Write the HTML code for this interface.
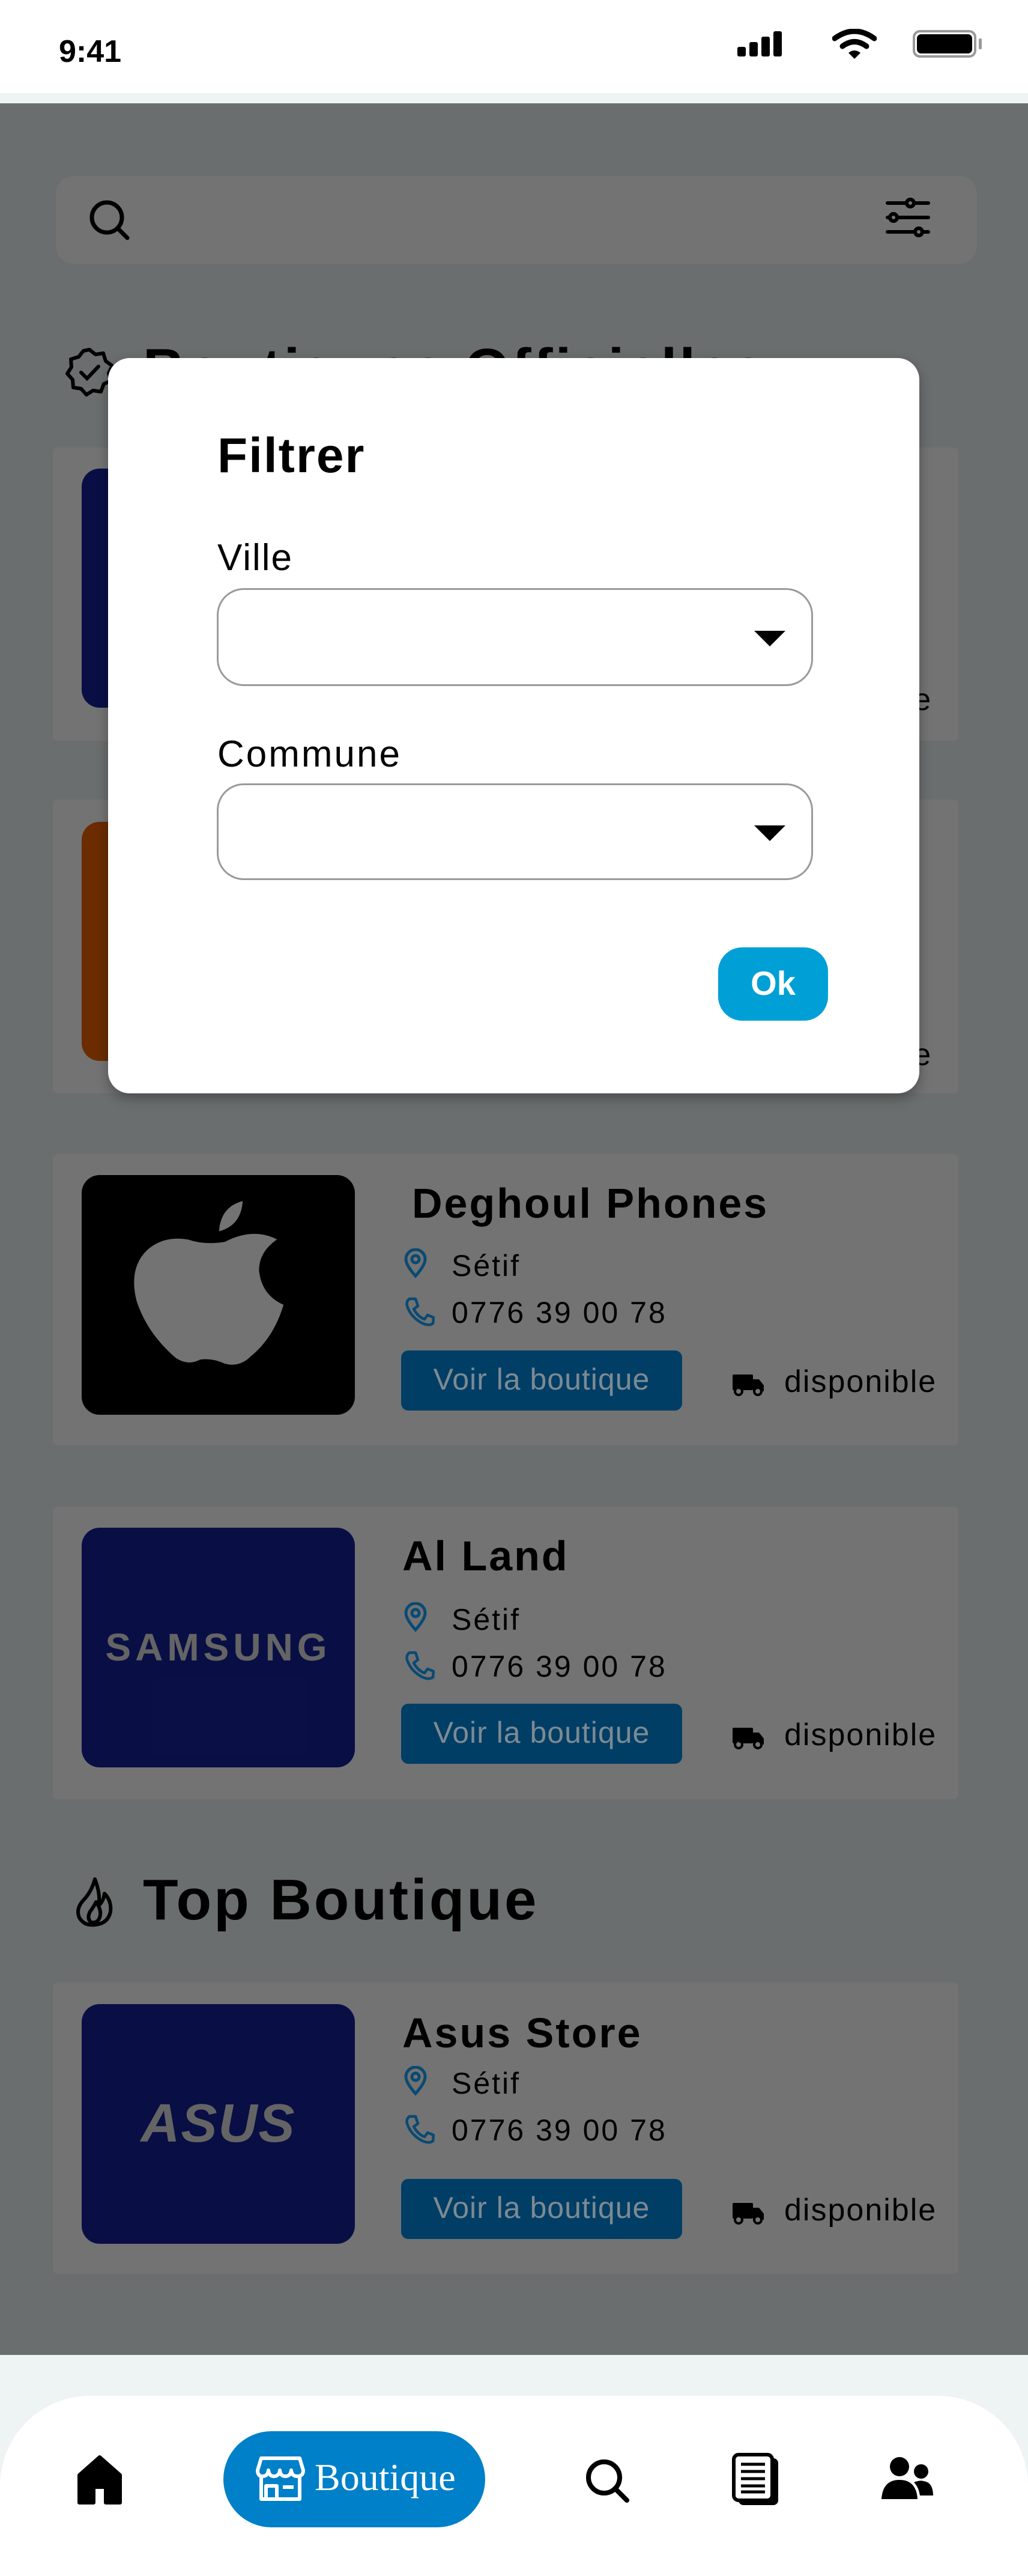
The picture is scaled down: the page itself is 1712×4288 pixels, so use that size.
<!DOCTYPE html>
<html><head><meta charset="utf-8">
<style>
*{margin:0;padding:0;box-sizing:border-box}
body{width:1712px;height:4268px;position:relative;overflow:hidden;background:#eef3f3;font-family:"Liberation Sans",sans-serif;color:#000}
.a{position:absolute}
.card{position:absolute;left:88px;width:1508px;background:#fff;border-radius:8px}
.logo{position:absolute;left:48px;width:455px;border-radius:30px;overflow:hidden}
.title{position:absolute;font-weight:bold;font-size:70px;letter-spacing:3px;white-space:nowrap}
.line{position:absolute;font-size:50px;letter-spacing:3px;white-space:nowrap}
.btn{position:absolute;width:468px;height:100px;background:#008ce3;border-radius:12px;color:#f2f2f2;font-size:50px;text-align:center;line-height:96px;letter-spacing:1px}
.disp{position:absolute;font-size:52px;letter-spacing:2px}
</style></head><body>
<!-- status bar -->
<div class="a" style="left:0;top:0;width:1712px;height:155px;background:#fff"></div>
<div class="a" style="left:98px;top:56px;font-size:52px;font-weight:bold">9:41</div>
<svg class="a" style="left:1228px;top:52px" width="76" height="44"><rect x="0" y="26" width="14" height="16" rx="3"/><rect x="20" y="18" width="14" height="24" rx="3"/><rect x="40" y="9" width="14" height="33" rx="3"/><rect x="60" y="0" width="14" height="42" rx="3"/></svg>
<svg class="a" style="left:1386px;top:48px" width="74" height="52" viewBox="0 0 74 52"><path d="M4 16 Q37 -8 70 16" stroke="#000" stroke-width="9" fill="none" stroke-linecap="round"/><path d="M17 29 Q37 14 57 29" stroke="#000" stroke-width="9" fill="none" stroke-linecap="round"/><path d="M27 40 L37 50 L47 40 Q37 32 27 40Z"/></svg>
<div class="a" style="left:1520px;top:50px;width:106px;height:46px;border:4px solid #999;border-radius:12px"></div>
<div class="a" style="left:1527px;top:57px;width:92px;height:32px;background:#000;border-radius:7px"></div>
<div class="a" style="left:1630px;top:64px;width:5px;height:18px;background:#999;border-radius:2px"></div>

<!-- search -->
<div class="a" style="left:93px;top:293px;width:1534px;height:146px;background:#fff;border-radius:30px"></div>
<svg class="a" style="left:146px;top:330px" width="76" height="70"><circle cx="32" cy="32" r="25" stroke="#000" stroke-width="7" fill="none"/><path d="M50 50 L66 66" stroke="#000" stroke-width="7" stroke-linecap="round"/></svg>
<svg class="a" style="left:1474px;top:328px" width="76" height="70"><g stroke="#000" stroke-width="6" fill="none" stroke-linecap="round"><path d="M4 10H72M4 34H72M4 58H72"/><circle cx="42" cy="10" r="6" fill="#fff"/><circle cx="14" cy="34" r="6" fill="#fff"/><circle cx="56" cy="58" r="6" fill="#fff"/></g></svg>

<!-- heading officielles -->
<svg class="a" style="left:106px;top:576px" width="86" height="86" viewBox="0 0 86 86"><path d="M43 6 L53 14 L66 12 L70 25 L81 33 L75 45 L79 58 L67 63 L62 76 L49 74 L38 81 L29 71 L16 69 L15 56 L6 46 L13 35 L12 22 L25 18 L33 8Z" stroke="#000" stroke-width="6" fill="none" stroke-linejoin="round"/><path d="M29 44 L39 54 L58 34" stroke="#000" stroke-width="6" fill="none" stroke-linecap="round"/></svg>
<div class="a" style="left:238px;top:560px;font-size:96px;font-weight:bold;letter-spacing:4px">Boutiques Officielles</div>

<!-- card1 -->
<div class="card" style="top:745px;height:488px">
 <div class="logo" style="top:35px;height:398px;background:#162399"></div>
 <div class="disp" style="left:1210px;top:390px">disponible</div>
</div>
<!-- card2 -->
<div class="card" style="top:1331px;height:489px">
 <div class="logo" style="top:37px;height:398px;background:#ee6200"></div>
 <div class="disp" style="left:1210px;top:395px">disponible</div>
</div>

<!-- card3 -->
<div class="card" style="top:1921px;height:485px">
 <div class="logo" style="top:35px;height:399px;background:#000">
  <svg width="455" height="399" viewBox="0 0 455 399"><g transform="translate(207 182) scale(1.36) translate(-207 -180)"><path d="M230 128 Q265 110 294 125 Q272 140 272 163 Q275 193 302 205 Q290 245 262 268 Q248 282 230 277 Q215 270 200 272 Q185 280 170 270 Q135 240 122 200 Q112 160 135 138 Q155 120 185 125 Q205 132 230 128Z" fill="#fff"/><path d="M223 115 Q225 85 252 78 Q250 108 223 115Z" fill="#fff"/></g></svg>
 </div>
 <div class="title" style="left:598px;top:42px">Deghoul Phones</div>
</div>
<!-- card4 -->
<div class="card" style="top:2508px;height:487px">
 <div class="logo" style="top:35px;height:399px;background:#162399;color:#ddd;font-weight:bold;font-size:64px;text-align:center;line-height:399px;letter-spacing:7px">SAMSUNG</div>
 <div class="title" style="left:582px;top:42px">Al Land</div>
</div>
<!-- top boutique heading -->
<svg class="a" style="left:122px;top:3120px" width="70" height="90" viewBox="0 0 70 90"><path d="M36 8 Q30 30 16 44 Q4 58 10 72 Q18 86 36 84 Q58 82 62 62 Q64 44 52 32 Q50 46 42 52 Q46 34 36 8Z M30 80 Q22 74 28 62 Q34 54 38 46 Q48 60 44 72 Q40 82 30 80Z" stroke="#000" stroke-width="6" fill="none" stroke-linejoin="round"/></svg>
<div class="a" style="left:238px;top:3108px;font-size:96px;font-weight:bold;letter-spacing:4px">Top Boutique</div>
<!-- card5 -->
<div class="card" style="top:3300px;height:485px">
 <div class="logo" style="top:36px;height:399px;background:#162399;color:#ddd;font-weight:bold;font-style:italic;font-size:90px;text-align:center;line-height:399px;letter-spacing:2px">ASUS</div>
 <div class="title" style="left:582px;top:44px">Asus Store</div>
</div>

<!-- bottom nav -->
<div class="a" style="left:0;top:3988px;width:1712px;height:300px;background:#fff;border-radius:150px 150px 0 0"></div>

<!-- overlay -->
<div class="a" style="left:0;top:172px;width:1712px;height:3748px;background:rgba(0,0,0,0.55)"></div>

<!-- bottom nav content -->
<svg class="a" style="left:126px;top:4084px" width="80" height="88" viewBox="0 0 80 88"><path d="M6 36 L40 6 L74 36 V82 H50 V56 H30 V82 H6Z" fill="#000" stroke="#000" stroke-width="6" stroke-linejoin="round"/></svg>
<div class="a" style="left:372px;top:4047px;width:436px;height:160px;background:#0080c8;border-radius:80px"></div>
<svg class="a" style="left:425px;top:4088px" width="84" height="76" viewBox="0 0 84 76"><g stroke="#fff" stroke-width="6" fill="none" stroke-linejoin="round"><path d="M10 4 H74 L80 24 Q80 34 70 34 Q61 34 60 24 Q59 34 50 34 Q42 34 41 24 Q40 34 31 34 Q23 34 22 24 Q21 34 12 34 Q4 34 4 24Z"/><path d="M10 34 V72 H74 V34"/><path d="M18 72 V50 H36 V72"/><path d="M46 52 H64"/></g></svg>
<div class="a" style="left:524px;top:4087px;font-family:'Liberation Serif',serif;font-size:64px;color:#fff">Boutique</div>
<svg class="a" style="left:972px;top:4090px" width="80" height="80"><circle cx="34" cy="34" r="26" stroke="#000" stroke-width="8" fill="none"/><path d="M54 54 L72 72" stroke="#000" stroke-width="8" stroke-linecap="round"/></svg>
<svg class="a" style="left:1218px;top:4082px" width="86" height="92" viewBox="0 0 86 92"><rect x="12" y="10" width="66" height="78" rx="8" fill="#000"/><rect x="4" y="4" width="64" height="76" rx="8" fill="#fff" stroke="#000" stroke-width="6"/><path d="M16 20H56M16 32H56M16 44H56M16 56H56M16 66H56" stroke="#000" stroke-width="5"/></svg>
<svg class="a" style="left:1466px;top:4088px" width="90" height="74" viewBox="0 0 90 74"><circle cx="32" cy="18" r="16"/><circle cx="68" cy="26" r="12"/><path d="M2 72 Q4 40 32 40 Q60 40 62 72Z"/><path d="M56 44 Q66 40 72 42 Q88 44 88 66 H66 Q64 52 56 44Z"/></svg>

<!-- modal -->
<div class="a" style="left:180px;top:596px;width:1351px;height:1224px;background:#fff;border-radius:36px;box-shadow:0 8px 20px rgba(0,0,0,.3)"></div>
<div class="a" style="left:362px;top:712px;font-size:82px;font-weight:bold;letter-spacing:2px">Filtrer</div>
<div class="a" style="left:362px;top:893px;font-size:62px;letter-spacing:2px">Ville</div>
<div class="a" style="left:361px;top:979px;width:993px;height:163px;border:3px solid #9a9a9a;border-radius:45px"></div>
<svg class="a" style="left:1256px;top:1050px" width="52" height="26"><path d="M0 0H52L26 26Z"/></svg>
<div class="a" style="left:362px;top:1220px;font-size:62px;letter-spacing:3px">Commune</div>
<div class="a" style="left:361px;top:1304px;width:993px;height:161px;border:3px solid #9a9a9a;border-radius:45px"></div>
<svg class="a" style="left:1256px;top:1374px" width="52" height="26"><path d="M0 0H52L26 26Z"/></svg>
<div class="a" style="left:1196px;top:1577px;width:183px;height:122px;background:#00a0d6;border-radius:40px;color:#fff;font-weight:bold;font-size:56px;text-align:center;line-height:120px">Ok</div>

<!-- card3 rows -->
<svg class="a" style="left:672px;top:2078px" width="40" height="50" viewBox="0 0 40 50"><path d="M20 46 Q4 28 4 18 A16 16 0 0 1 36 18 Q36 28 20 46Z" stroke="#0a4a72" stroke-width="5" fill="none"/><circle cx="20" cy="18" r="6" stroke="#0a4a72" stroke-width="5" fill="none"/></svg>
<div class="line" style="left:752px;top:2078px">Sétif</div>
<svg class="a" style="left:674px;top:2158px" width="50" height="52" viewBox="0 0 50 52"><path d="M8 4 L18 4 L22 16 L15 21 Q22 34 33 38 L38 31 L48 35 L47 45 Q40 50 28 44 Q10 34 4 16 Q2 8 8 4Z" stroke="#0a4a72" stroke-width="4.5" fill="none" stroke-linejoin="round"/></svg>
<div class="line" style="left:752px;top:2156px">0776 39 00 78</div>
<div class="btn" style="left:668px;top:2248px;background:#003e66;color:#7d8a92">Voir la boutique</div>
<svg class="a" style="left:1220px;top:2288px" width="54" height="36" viewBox="0 0 54 36"><rect x="0" y="0" width="34" height="26" rx="2"/><path d="M34 8 H44 L52 18 V28 H34Z"/><circle cx="10" cy="28" r="6" fill="#737373" stroke="#000" stroke-width="4"/><circle cx="42" cy="28" r="6" fill="#737373" stroke="#000" stroke-width="4"/></svg>
<div class="disp" style="left:1306px;top:2270px">disponible</div>

<!-- card4 rows -->
<svg class="a" style="left:672px;top:2667px" width="40" height="50" viewBox="0 0 40 50"><path d="M20 46 Q4 28 4 18 A16 16 0 0 1 36 18 Q36 28 20 46Z" stroke="#0a4a72" stroke-width="5" fill="none"/><circle cx="20" cy="18" r="6" stroke="#0a4a72" stroke-width="5" fill="none"/></svg>
<div class="line" style="left:752px;top:2667px">Sétif</div>
<svg class="a" style="left:674px;top:2747px" width="50" height="52" viewBox="0 0 50 52"><path d="M8 4 L18 4 L22 16 L15 21 Q22 34 33 38 L38 31 L48 35 L47 45 Q40 50 28 44 Q10 34 4 16 Q2 8 8 4Z" stroke="#0a4a72" stroke-width="4.5" fill="none" stroke-linejoin="round"/></svg>
<div class="line" style="left:752px;top:2745px">0776 39 00 78</div>
<div class="btn" style="left:668px;top:2836px;background:#003e66;color:#7d8a92">Voir la boutique</div>
<svg class="a" style="left:1220px;top:2876px" width="54" height="36" viewBox="0 0 54 36"><rect x="0" y="0" width="34" height="26" rx="2"/><path d="M34 8 H44 L52 18 V28 H34Z"/><circle cx="10" cy="28" r="6" fill="#737373" stroke="#000" stroke-width="4"/><circle cx="42" cy="28" r="6" fill="#737373" stroke="#000" stroke-width="4"/></svg>
<div class="disp" style="left:1306px;top:2858px">disponible</div>

<!-- card5 rows -->
<svg class="a" style="left:672px;top:3439px" width="40" height="50" viewBox="0 0 40 50"><path d="M20 46 Q4 28 4 18 A16 16 0 0 1 36 18 Q36 28 20 46Z" stroke="#0a4a72" stroke-width="5" fill="none"/><circle cx="20" cy="18" r="6" stroke="#0a4a72" stroke-width="5" fill="none"/></svg>
<div class="line" style="left:752px;top:3439px">Sétif</div>
<svg class="a" style="left:674px;top:3519px" width="50" height="52" viewBox="0 0 50 52"><path d="M8 4 L18 4 L22 16 L15 21 Q22 34 33 38 L38 31 L48 35 L47 45 Q40 50 28 44 Q10 34 4 16 Q2 8 8 4Z" stroke="#0a4a72" stroke-width="4.5" fill="none" stroke-linejoin="round"/></svg>
<div class="line" style="left:752px;top:3517px">0776 39 00 78</div>
<div class="btn" style="left:668px;top:3627px;background:#003e66;color:#7d8a92">Voir la boutique</div>
<svg class="a" style="left:1220px;top:3667px" width="54" height="36" viewBox="0 0 54 36"><rect x="0" y="0" width="34" height="26" rx="2"/><path d="M34 8 H44 L52 18 V28 H34Z"/><circle cx="10" cy="28" r="6" fill="#737373" stroke="#000" stroke-width="4"/><circle cx="42" cy="28" r="6" fill="#737373" stroke="#000" stroke-width="4"/></svg>
<div class="disp" style="left:1306px;top:3649px">disponible</div>
</body></html>
